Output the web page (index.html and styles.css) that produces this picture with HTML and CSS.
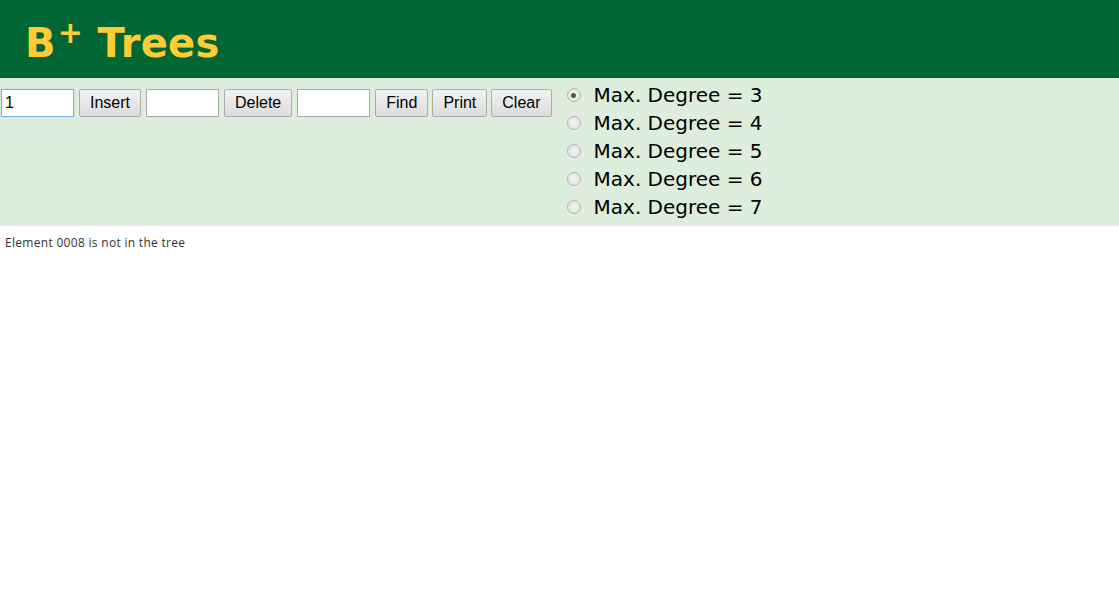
FILE: index.html
```html
<!DOCTYPE html>
<html lang="en">
<head>
    <meta charset="UTF-8">
    <title>B+ Tree Visualization</title>
    <link rel="stylesheet" href="styles.css">
</head>
<body>
    <div class="header">
        <h1>B<sup>+</sup> Trees</h1>
    </div>

    <div class="controls">
        <div class="algo-controls">
            <input type="text" class="field focused" value="1">
            <button>Insert</button>
            <input type="text" class="field">
            <button>Delete</button>
            <input type="text" class="field">
            <button>Find</button>
            <button>Print</button>
            <button>Clear</button>
        </div>
        <div class="degree-list">
            <label class="degree"><span class="radio checked"></span>Max. Degree = 3</label>
            <label class="degree"><span class="radio"></span>Max. Degree = 4</label>
            <label class="degree"><span class="radio"></span>Max. Degree = 5</label>
            <label class="degree"><span class="radio"></span>Max. Degree = 6</label>
            <label class="degree"><span class="radio"></span>Max. Degree = 7</label>
        </div>
    </div>

    <div class="canvas">
        <div class="message">Element 0008 is not in the tree</div>
    </div>
</body>
</html>
```

FILE: styles.css
```css
body {
    margin: 0;
    font-family: "DejaVu Sans", Verdana, sans-serif;
    background-color: #fff;
}
.header {
    background-color: #006633;
    height: 78px;
    padding-left: 25px;
    box-sizing: border-box;
}
h1 {
    margin: 0;
    color: #ffcc33;
    font-size: 40px;
    font-weight: bold;
    line-height: 86px;
    letter-spacing: 0.3px;
}
h1 sup {
    font-size: 30px;
    vertical-align: 0;
    position: relative;
    top: -14px;
    margin-left: 2px;
}
.controls {
    background-color: #ddeedd;
    height: 148px;
    display: flex;
    align-items: flex-start;
}
.algo-controls {
    display: flex;
    gap: 4px;
    padding-top: 11px;
}
.field {
    width: 73px;
    height: 28px;
    box-sizing: border-box;
    border: 1px solid #a9a9a9;
    background: #fff;
    font-family: "Liberation Sans", Arial, sans-serif;
    font-size: 16px;
    padding: 0 3px;
    margin: 0 1px;
}
.field.focused {
    border: 1px solid #7eaee8;
    box-shadow: 0 0 1px #9cc3f0;
    outline: none;
}
button {
    height: 28px;
    padding: 0 10px;
    margin: 0;
    font-family: "Liberation Sans", Arial, sans-serif;
    font-size: 16px;
    color: #000;
    border: 1px solid #adadad;
    border-radius: 2px;
    background: linear-gradient(#f2f2f2, #dcdcdc);
}
.degree-list {
    display: flex;
    flex-direction: column;
    margin-left: 15px;
    padding-top: 3px;
}
.degree {
    display: flex;
    align-items: center;
    height: 28px;
    font-size: 20px;
    color: #000;
}
.radio {
    width: 14px;
    height: 14px;
    border: 1px solid #b5b5b5;
    border-radius: 50%;
    background: radial-gradient(#f4f4f4, #dcdcdc);
    margin-right: 13px;
    box-sizing: border-box;
    position: relative;
}
.radio.checked::after {
    content: "";
    position: absolute;
    left: 3.5px;
    top: 3.5px;
    width: 5px;
    height: 5px;
    border-radius: 50%;
    background: #555;
}
.message {
    font-family: "Open Sans", sans-serif;
    font-size: 12px;
    letter-spacing: 0.3px;
    color: #333;
    padding: 8px 0 0 5px;
}
```
